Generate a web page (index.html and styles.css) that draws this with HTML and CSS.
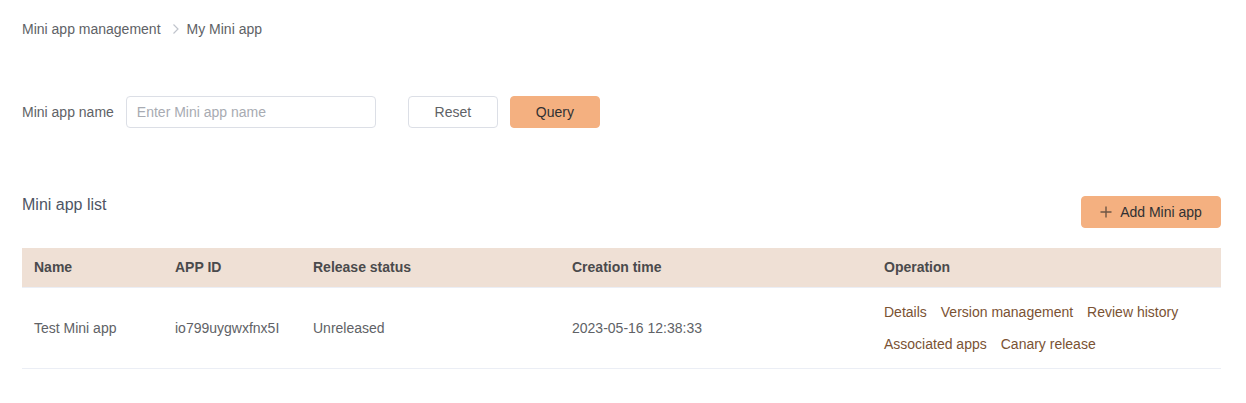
FILE: index.html
```html
<!DOCTYPE html>
<html lang="en">
<head>
<meta charset="utf-8">
<title>My Mini app</title>
<link rel="stylesheet" href="styles.css">
</head>
<body>
<div class="page">
  <nav class="breadcrumb">
    <span class="crumb">Mini app management</span>
    <svg class="sep" width="8" height="12" viewBox="0 0 8 12"><path d="M1.5 1.5 L6 6 L1.5 10.5" fill="none" stroke="#c0c4cc" stroke-width="1.2"/></svg>
    <span class="crumb current">My Mini app</span>
  </nav>

  <form class="filter">
    <label class="filter-label" for="name">Mini app name</label>
    <input id="name" class="input" type="text" placeholder="Enter Mini app name">
    <button type="button" class="btn btn-default">Reset</button>
    <button type="button" class="btn btn-primary">Query</button>
  </form>

  <section class="list">
    <div class="list-head">
      <h2 class="list-title">Mini app list</h2>
      <button type="button" class="btn btn-primary btn-add">
        <svg width="12" height="12" viewBox="0 0 12 12"><path d="M6 0.5 V11.5 M0.5 6 H11.5" stroke="#6e5644" stroke-width="1.4" fill="none"/></svg>
        <span>Add Mini app</span>
      </button>
    </div>

    <table class="table">
      <colgroup>
        <col class="c1"><col class="c2"><col class="c3"><col class="c4"><col class="c5">
      </colgroup>
      <thead>
        <tr>
          <th>Name</th>
          <th>APP ID</th>
          <th>Release status</th>
          <th>Creation time</th>
          <th>Operation</th>
        </tr>
      </thead>
      <tbody>
        <tr>
          <td>Test Mini app</td>
          <td>io799uygwxfnx5I</td>
          <td>Unreleased</td>
          <td>2023-05-16 12:38:33</td>
          <td>
            <div class="ops">
              <a class="op">Details</a>
              <a class="op">Version management</a>
              <a class="op">Review history</a>
              <a class="op">Associated apps</a>
              <a class="op">Canary release</a>
            </div>
          </td>
        </tr>
      </tbody>
    </table>
  </section>
</div>
</body>
</html>
```

FILE: styles.css
```css
* { box-sizing: border-box; }
html, body { margin: 0; padding: 0; background: #fff; }
body {
  font-family: "Liberation Sans", Arial, sans-serif;
  font-size: 14px;
  color: #606266;
}
.page { padding: 20px 25px 0 22px; }

.breadcrumb {
  display: flex;
  align-items: center;
  height: 18px;
  line-height: 18px;
}
.crumb { color: #606266; }
.sep { margin: 0 7px 0 11px; }

.filter {
  display: flex;
  align-items: center;
  margin: 58px 0 0;
  height: 32px;
}
.filter-label { color: #606266; margin-right: 12px; }
.input {
  width: 250px;
  height: 32px;
  border: 1px solid #dcdfe6;
  border-radius: 4px;
  padding: 0 10px;
  font: inherit;
  color: #606266;
  outline: none;
  margin-right: 32px;
}
.input::placeholder { color: #a8abb2; }

.btn {
  height: 32px;
  width: 90px;
  border-radius: 4px;
  font: inherit;
  font-size: 14px;
  cursor: pointer;
  padding: 0;
}
.btn-default {
  background: #fff;
  border: 1px solid #dcdfe6;
  color: #606266;
  margin-right: 12px;
}
.btn-primary {
  background: #f4b080;
  border: 1px solid #f4b080;
  color: #303133;
}

.list { margin-top: 68px; }
.list-head {
  display: flex;
  justify-content: space-between;
  align-items: flex-start;
}
.list-title {
  margin: 0;
  padding-top: 1px;
  font-size: 16px;
  font-weight: normal;
  line-height: 16px;
  color: #4e5564;
}
.btn-add {
  width: 140px;
  display: flex;
  align-items: center;
  justify-content: center;
  gap: 8px;
}

.table {
  width: 100%;
  margin-top: 20px;
  border-collapse: collapse;
  table-layout: fixed;
}
.c1 { width: 141px; }
.c2 { width: 138px; }
.c3 { width: 259px; }
.c4 { width: 312px; }
.c5 { width: auto; }

th {
  background: #efe0d5;
  height: 39px;
  text-align: left;
  padding: 0 12px;
  font-weight: bold;
  color: #4a4a4c;
  border-bottom: 1px solid #ebeef5;
}
td {
  padding: 8px 12px;
  height: 80px;
  color: #606266;
  border-bottom: 1px solid #ebeef5;
  vertical-align: middle;
}
.ops {
  display: flex;
  flex-wrap: wrap;
  column-gap: 14px;
  line-height: 32px;
}
.op { color: #7a5233; cursor: pointer; }
```
